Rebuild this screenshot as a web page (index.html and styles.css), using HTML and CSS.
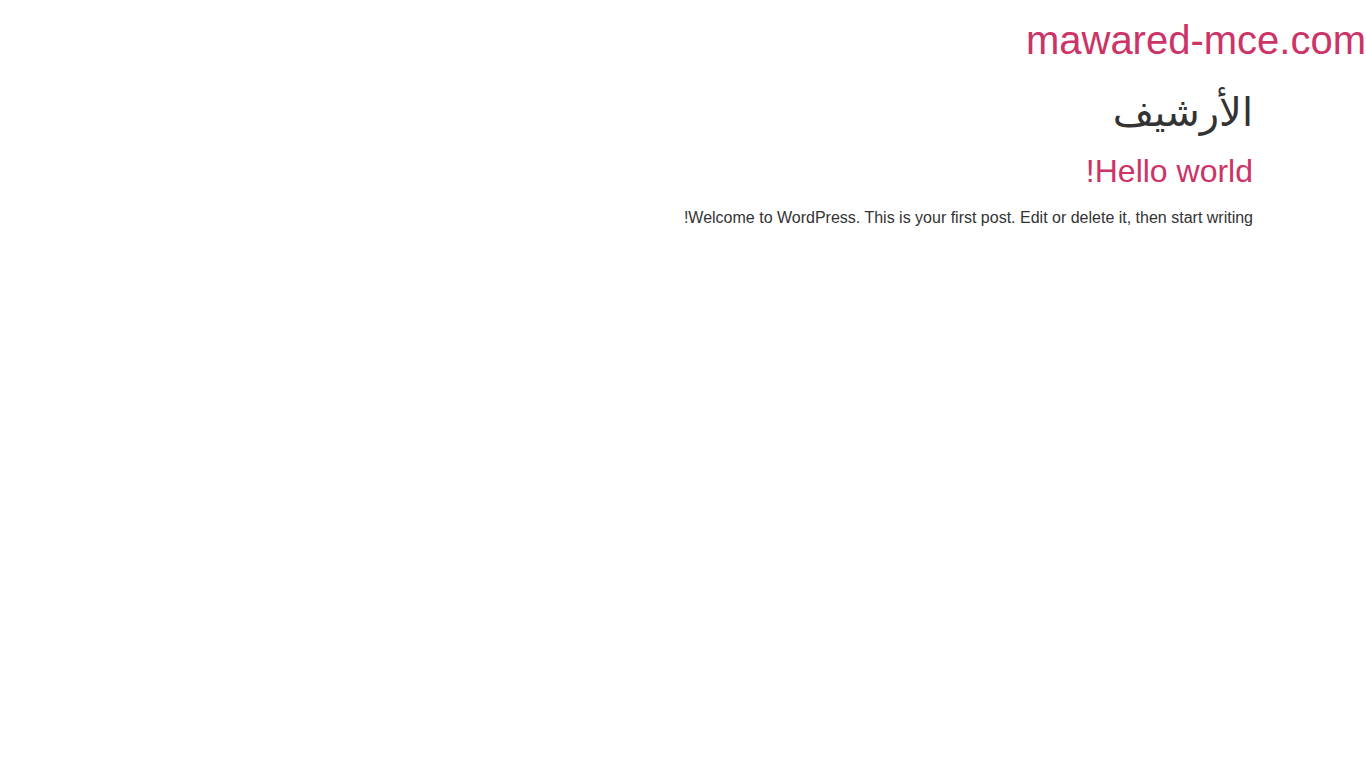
FILE: index.html
```html
<!DOCTYPE html>
<html lang="ar" dir="rtl">
<head>
<meta charset="utf-8">
<title>الأرشيف - mawared-mce.com</title>
<link rel="stylesheet" href="styles.css">
</head>
<body>
<header class="site-header">
  <p class="site-title"><a href="#">mawared-mce.com</a></p>
</header>
<main class="site-main">
  <header class="page-header">
    <h1 class="entry-title">الأرشيف</h1>
  </header>
  <div class="page-content">
    <article class="post">
      <h2 class="post-title"><a href="#">Hello world!</a></h2>
      <p class="excerpt">Welcome to WordPress. This is your first post. Edit or delete it, then start writing!</p>
    </article>
  </div>
</main>
</body>
</html>
```
FILE: styles.css
```css
html, body {
  margin: 0;
  padding: 0;
  background: #fff;
}
body {
  font-family: "Liberation Sans", "DejaVu Sans", Arial, sans-serif;
  font-size: 16px;
  line-height: 1.5;
  color: #333;
  direction: rtl;
  text-align: right;
}
a {
  color: #c36;
  text-decoration: none;
}
.site-header {
  padding-top: 16px;
}
.site-title {
  margin: 0;
  font-size: 40px;
  line-height: 1.2;
  font-weight: 400;
}
.site-main {
  max-width: 1140px;
  margin: 0 auto;
  padding-top: 24px;
}
.entry-title {
  margin: 0 0 16px;
  font-size: 40px;
  line-height: 1.2;
  font-weight: 400;
  color: #333;
}
.post-title {
  margin: 0 0 16px;
  font-size: 32px;
  line-height: 1.2;
  font-weight: 400;
}
.excerpt {
  margin: 0;
}
```
